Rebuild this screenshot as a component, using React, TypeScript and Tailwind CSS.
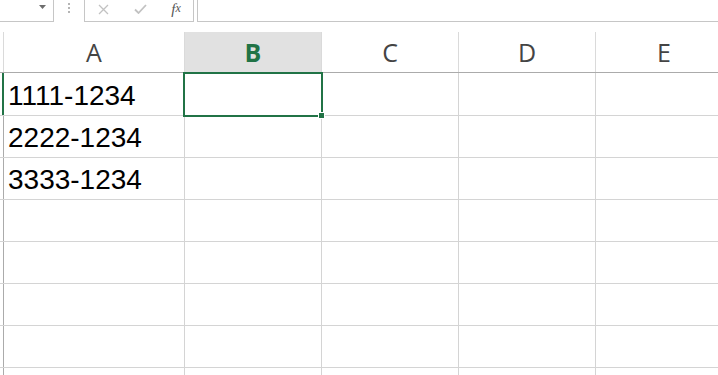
import React from "react";

const COLS = [
  { label: "A", w: "w-[181px]" },
  { label: "B", w: "w-[137px]" },
  { label: "C", w: "w-[137px]" },
  { label: "D", w: "w-[137px]" },
  { label: "E", w: "w-[137px]" },
];

const ROWS = ["1111-1234", "2222-1234", "3333-1234", "", "", "", "", ""];

export default function App() {
  return (
    <div className="relative w-[718px] h-[375px] overflow-hidden bg-white" style={{ fontFamily: "'Open Sans', sans-serif" }}>
      {/* formula bar */}
      <div className="flex h-[22px]">
        <div className="w-[54px] shrink-0 h-full border-r border-b border-[#c6c6c6] flex items-start justify-end pr-[7px] pt-[5px]">
          <svg width="7" height="4" viewBox="0 0 7 4"><path d="M0 0h7L3.5 4z" fill="#6d6d6d" /></svg>
        </div>
        <div className="w-[30px] shrink-0 flex flex-col items-center gap-[2px] pt-[3px]">
          <span className="w-[2px] h-[2px] bg-[#b5b5b5]" />
          <span className="w-[2px] h-[2px] bg-[#b5b5b5]" />
          <span className="w-[2px] h-[2px] bg-[#b5b5b5]" />
        </div>
        <div className="w-[110px] shrink-0 h-full border-l border-r border-b border-[#c6c6c6] flex items-center pb-[3px]">
          <div className="w-[37px] flex justify-center">
            <svg width="11" height="11" viewBox="0 0 11 11"><path d="M1 1l9 9M10 1l-9 9" stroke="#c2c2c2" strokeWidth="1.3" /></svg>
          </div>
          <div className="w-[37px] flex justify-center">
            <svg width="13" height="10" viewBox="0 0 13 10"><path d="M1 5.5l3.5 3.5L12 1" stroke="#c2c2c2" strokeWidth="1.8" fill="none" /></svg>
          </div>
          <div className="w-[34px] flex justify-center text-[15px] italic text-[#555] leading-none" style={{ fontFamily: "'Liberation Serif', serif" }}>
            f<span className="text-[12px]">x</span>
          </div>
        </div>
        <div className="w-[3px] shrink-0" />
        <div className="flex-1 h-full border-l border-b border-[#c6c6c6]" />
      </div>

      <div className="h-[10px]" />

      {/* column headers */}
      <div className="flex h-[41px] border-b border-[#ababab]">
        <div className="w-[4px] shrink-0 border-r border-[#dadada]" />
        {COLS.map((c) => (
          <div
            key={c.label}
            className={`${c.w} shrink-0 border-r border-[#dadada] flex items-center justify-center text-[25px] leading-none ${
              c.label === "B" ? "bg-[#e1e1e1] text-[#217346] font-bold" : "text-[#444444]"
            }`}
          >
            {c.label}
          </div>
        ))}
      </div>

      {/* rows */}
      {ROWS.map((v, i) => (
        <div key={i} className={`flex border-b border-[#d4d4d4] ${i === 0 ? "h-[43px]" : "h-[42px]"}`}>
          <div className={`w-[4px] shrink-0 ${i === 0 ? "border-r-2 border-[#217346]" : "border-r border-[#ababab]"}`} />
          {COLS.map((c, j) => (
            <div
              key={c.label}
              className={`${c.w} shrink-0 border-r border-[#d4d4d4] flex items-end pl-[4px] pb-[5px] text-[28px] leading-none text-black`}
              style={{ fontFamily: "'Liberation Sans', sans-serif" }}
            >
              {j === 0 ? v : ""}
            </div>
          ))}
        </div>
      ))}

      {/* selected cell B1 */}
      <div className="absolute left-[183px] top-[72px] w-[140px] h-[45px] border-2 border-[#217346]" />
      <div className="absolute left-[318px] top-[112px] w-[7px] h-[7px] bg-[#217346] border border-white" />
    </div>
  );
}
